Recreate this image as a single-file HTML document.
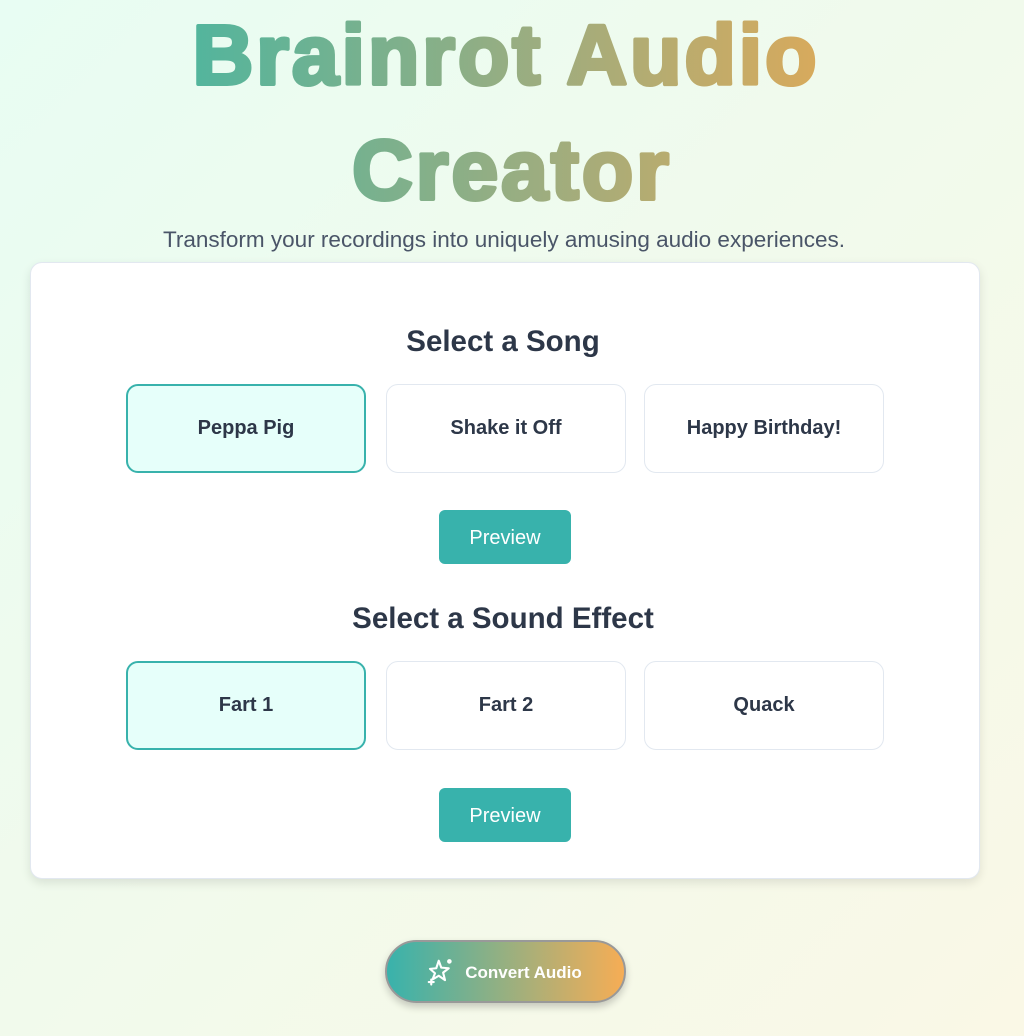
<!DOCTYPE html>
<html><head><meta charset="utf-8"><style>
*{box-sizing:border-box;margin:0;padding:0}
html,body{width:1024px;height:1036px;overflow:hidden}
body{font-family:"Liberation Sans",Arial,sans-serif;background:linear-gradient(135deg,#e8fdf3 0%,#f1faec 50%,#faf8e6 100%);position:relative}
svg.title{position:absolute;left:0;top:0}
.sub{position:absolute;top:227px;left:-8px;width:1024px;text-align:center;font-size:22.5px;color:#4a5568}
.card{position:absolute;left:30px;top:262px;width:950px;height:617px;background:#fff;border:1px solid #e2e8f0;border-radius:12px;box-shadow:0 4px 10px rgba(0,0,0,.1)}
h2{position:absolute;left:-3px;width:950px;text-align:center;font-size:29.5px;font-weight:bold;color:#2d3748}
.opt{position:absolute;width:240px;height:89px;border:1px solid #e2e8f0;border-radius:12px;display:flex;align-items:center;justify-content:center;font-size:20px;font-weight:bold;color:#2d3748;background:#fff}
.opt.sel{border:2px solid #38b2ac;background:#e6fffa}
.pv{position:absolute;left:408px;width:132px;height:54px;background:#38b2ac;border-radius:6px;color:#fff;font-size:20px;display:flex;align-items:center;justify-content:center;padding-top:3px}
.conv{position:absolute;left:385px;top:940px;width:241px;height:63px;border-radius:32px;border:2px solid #999;background:linear-gradient(90deg,#38b2ac,#f6ad55);display:flex;align-items:center;justify-content:center;color:#fff;font-weight:bold;font-size:17px;box-shadow:0 4px 8px rgba(0,0,0,.2);padding-top:3px;padding-right:4px}
</style></head><body>
<svg class="title" width="1024" height="220" viewBox="0 0 1024 220">
<defs><linearGradient id="g" x1="190" x2="820" y1="0" y2="0" gradientUnits="userSpaceOnUse"><stop offset="0" stop-color="#52b59d"/><stop offset=".55" stop-color="#9cad80"/><stop offset="1" stop-color="#d8aa5c"/></linearGradient></defs>
<g font-family="Liberation Sans, Arial, sans-serif" font-weight="bold" font-size="84" fill="url(#g)" stroke="url(#g)" stroke-width="4" stroke-linejoin="round" text-anchor="middle" letter-spacing="3">
<text x="506" y="84">Brainrot Audio</text>
<text x="512" y="199">Creator</text>
</g></svg>
<div class="sub">Transform your recordings into uniquely amusing audio experiences.</div>
<div class="card">
<h2 style="top:62px">Select a Song</h2>
<div class="opt sel" style="left:95px;top:121px">Peppa Pig</div>
<div class="opt" style="left:355px;top:121px">Shake it Off</div>
<div class="opt" style="left:613px;top:121px">Happy Birthday!</div>
<div class="pv" style="top:247px">Preview</div>
<h2 style="top:339px">Select a Sound Effect</h2>
<div class="opt sel" style="left:95px;top:398px">Fart 1</div>
<div class="opt" style="left:355px;top:398px">Fart 2</div>
<div class="opt" style="left:613px;top:398px">Quack</div>
<div class="pv" style="top:525px">Preview</div>
</div>
<div class="conv"><svg width="30" height="30" viewBox="0 0 24 24" fill="none" stroke="#fff" stroke-width="1.7" stroke-linejoin="round" stroke-linecap="round" style="margin-right:10px;margin-top:-3px"><path d="M11 3l2 5.5 6 .5-4.5 3.5 1.5 6-5-3.5-5 3L8 13 4 9.5l5-.5z"/><circle cx="19.5" cy="3.5" r="1"/><path d="M5 18v4M3 20h4"/></svg>Convert Audio</div>
</body></html>
